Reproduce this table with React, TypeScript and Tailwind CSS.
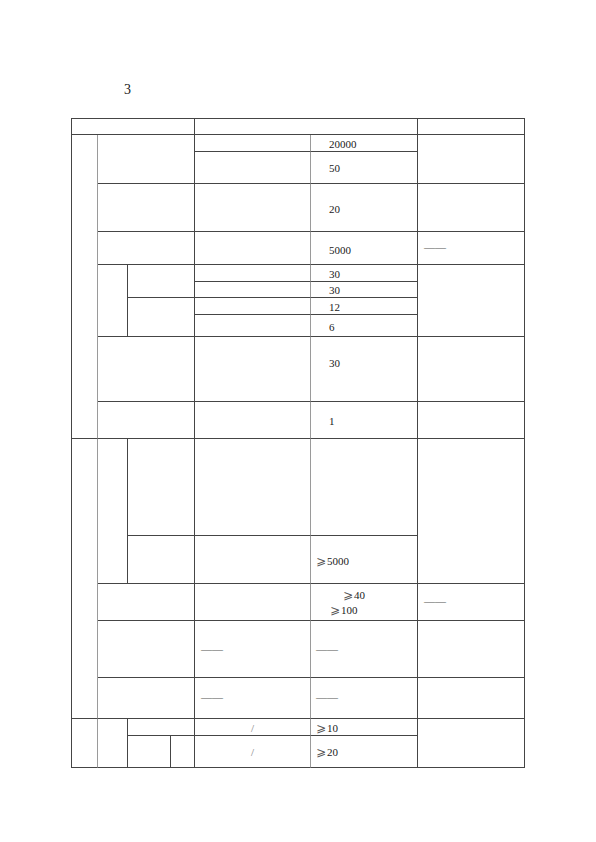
import React from "react";

const D = "border-[#454545]";
type CellProps = {
  c: string;
  r?: "dark" | "light";
  children?: React.ReactNode;
  inner?: string;
};

function Cell({ c, r = "dark", children, inner = "" }: CellProps) {
  const rc = r === "light" ? "border-r-[#9a9a9a]" : "border-r-[#454545]";
  return (
    <div className={`border-r border-b border-b-[#454545] ${rc} flex ${inner} ${c}`}>
      {children}
    </div>
  );
}

const dash = <span className="text-[#555] tracking-[0px]">——</span>;
const ge = (
  <span
    className="text-[12px] text-[#555] mr-[1px]"
    style={{ fontFamily: '"DejaVu Sans", "Noto Sans CJK SC", sans-serif' }}
  >
    ⩾
  </span>
);

export default function App() {
  return (
    <div
      className="w-[596px] h-[842px] bg-white text-[#1a1a1a] text-[11px] leading-none"
      style={{ fontFamily: '"Liberation Serif", "Noto Sans CJK SC", serif' }}
    >
      <div className="pt-[83px] pl-[124px] text-[14px] leading-[14px] h-[118px]">3</div>
      <div
        className={`ml-[71px] w-[454px] grid border-l border-t ${D} grid-cols-[26px_30px_43px_24px_116px_107px_107px] grid-rows-[16px_17px_32px_48px_33px_17px_16px_17px_22px_65px_37px_97px_48px_37px_57px_41px_17px_32px]`}
      >
        {/* header */}
        <Cell c="col-start-1 col-span-4 row-start-1" />
        <Cell c="col-start-5 col-span-2 row-start-1" />
        <Cell c="col-start-7 row-start-1" />

        {/* section 1 */}
        <Cell c="col-start-1 row-start-2 row-span-10" r="light" />
        <Cell c="col-start-2 col-span-3 row-start-2 row-span-2" />
        <Cell c="col-start-5 row-start-2" r="light" />
        <Cell c="col-start-6 row-start-2 items-center pl-[18px] pt-[2px]">20000</Cell>
        <Cell c="col-start-7 row-start-2 row-span-2" />
        <Cell c="col-start-5 row-start-3" r="light" />
        <Cell c="col-start-6 row-start-3 items-center pl-[18px] pt-[2px]">50</Cell>

        <Cell c="col-start-2 col-span-3 row-start-4" />
        <Cell c="col-start-5 row-start-4" r="light" />
        <Cell c="col-start-6 row-start-4 items-center pl-[18px] pt-[4px]">20</Cell>
        <Cell c="col-start-7 row-start-4" />

        <Cell c="col-start-2 col-span-3 row-start-5" />
        <Cell c="col-start-5 row-start-5" r="light" />
        <Cell c="col-start-6 row-start-5 items-center pl-[18px] pt-[4px]">5000</Cell>
        <Cell c="col-start-7 row-start-5 items-center pl-[6px] pb-[2px]">{dash}</Cell>

        <Cell c="col-start-2 row-start-6 row-span-4" />
        <Cell c="col-start-3 col-span-2 row-start-6 row-span-2" />
        <Cell c="col-start-5 row-start-6" r="light" />
        <Cell c="col-start-6 row-start-6 items-center pl-[18px] pt-[2px]">30</Cell>
        <Cell c="col-start-7 row-start-6 row-span-4" />
        <Cell c="col-start-5 row-start-7" r="light" />
        <Cell c="col-start-6 row-start-7 items-center pl-[18px] pt-[1px]">30</Cell>
        <Cell c="col-start-3 col-span-2 row-start-8 row-span-2" />
        <Cell c="col-start-5 row-start-8" r="light" />
        <Cell c="col-start-6 row-start-8 items-center pl-[18px] pt-[2px]">12</Cell>
        <Cell c="col-start-5 row-start-9" r="light" />
        <Cell c="col-start-6 row-start-9 items-center pl-[18px] pt-[3px]">6</Cell>

        <Cell c="col-start-2 col-span-3 row-start-10" />
        <Cell c="col-start-5 row-start-10" r="light" />
        <Cell c="col-start-6 row-start-10 items-center pl-[18px] pb-[12px]">30</Cell>
        <Cell c="col-start-7 row-start-10" />

        <Cell c="col-start-2 col-span-3 row-start-11" />
        <Cell c="col-start-5 row-start-11" r="light" />
        <Cell c="col-start-6 row-start-11 items-center pl-[18px] pt-[3px]">1</Cell>
        <Cell c="col-start-7 row-start-11" />

        {/* section 2 */}
        <Cell c="col-start-1 row-start-12 row-span-5" r="light" />
        <Cell c="col-start-2 row-start-12 row-span-2" />
        <Cell c="col-start-3 col-span-2 row-start-12" />
        <Cell c="col-start-5 row-start-12" r="light" />
        <Cell c="col-start-6 row-start-12" />
        <Cell c="col-start-7 row-start-12 row-span-2" />
        <Cell c="col-start-3 col-span-2 row-start-13" />
        <Cell c="col-start-5 row-start-13" r="light" />
        <Cell c="col-start-6 row-start-13 items-center pl-[5px] pt-[3px]">{ge}5000</Cell>

        <Cell c="col-start-2 col-span-3 row-start-14" />
        <Cell c="col-start-5 row-start-14" r="light" />
        <Cell c="col-start-6 row-start-14 flex-col justify-center gap-[3px] pt-[1px]">
          <span className="pl-[32px] flex items-center">{ge}40</span>
          <span className="pl-[19px] flex items-center">{ge}100</span>
        </Cell>
        <Cell c="col-start-7 row-start-14 items-center pl-[6px] pb-[2px]">{dash}</Cell>

        <Cell c="col-start-2 col-span-3 row-start-15" />
        <Cell c="col-start-5 row-start-15 items-center pl-[6px]" r="light">{dash}</Cell>
        <Cell c="col-start-6 row-start-15 items-center pl-[5px]">{dash}</Cell>
        <Cell c="col-start-7 row-start-15" />

        <Cell c="col-start-2 col-span-3 row-start-16" />
        <Cell c="col-start-5 row-start-16 items-center pl-[6px] pb-[2px]" r="light">{dash}</Cell>
        <Cell c="col-start-6 row-start-16 items-center pl-[5px] pb-[2px]">{dash}</Cell>
        <Cell c="col-start-7 row-start-16" />

        {/* section 3 */}
        <Cell c="col-start-1 row-start-17 row-span-2" r="light" />
        <Cell c="col-start-2 row-start-17 row-span-2" />
        <Cell c="col-start-3 col-span-2 row-start-17" />
        <Cell c="col-start-5 row-start-17 items-center justify-center pt-[2px] text-[#777]" r="light">/</Cell>
        <Cell c="col-start-6 row-start-17 items-center pl-[5px] pt-[2px]">{ge}10</Cell>
        <Cell c="col-start-7 row-start-17 row-span-2" />
        <Cell c="col-start-3 row-start-18" />
        <Cell c="col-start-4 row-start-18" />
        <Cell c="col-start-5 row-start-18 items-center justify-center pt-[1px] text-[#777]" r="light">/</Cell>
        <Cell c="col-start-6 row-start-18 items-center pl-[5px] pt-[1px]">{ge}20</Cell>
      </div>
    </div>
  );
}
